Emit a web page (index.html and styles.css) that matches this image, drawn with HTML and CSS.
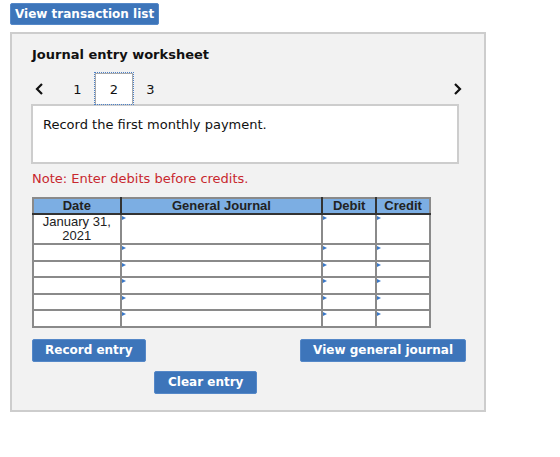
FILE: index.html
```html
<!DOCTYPE html>
<html lang="en">
<head>
  <meta charset="UTF-8">
  <title>Journal entry worksheet</title>
  <link rel="stylesheet" href="styles.css">
</head>
<body>
  <button class="btn btn-top">View transaction list</button>

  <div class="panel">
    <h2 class="panel-title">Journal entry worksheet</h2>

    <div class="steps">
      <span class="chev chev-prev">
        <svg width="9" height="12" viewBox="0 0 9 12"><polyline points="7,1 2,6 7,11" fill="none" stroke="#111" stroke-width="2.2"/></svg>
      </span>
      <span class="step">1</span>
      <span class="step active">2</span>
      <span class="step">3</span>
      <span class="spacer"></span>
      <span class="chev">
        <svg width="9" height="12" viewBox="0 0 9 12"><polyline points="2,1 7,6 2,11" fill="none" stroke="#111" stroke-width="2.2"/></svg>
      </span>
    </div>

    <div class="prompt">Record the first monthly payment.</div>

    <p class="note">Note: Enter debits before credits.</p>

    <table class="journal">
      <thead>
        <tr>
          <th class="c-date">Date</th>
          <th class="c-acct">General Journal</th>
          <th class="c-num">Debit</th>
          <th class="c-num">Credit</th>
        </tr>
      </thead>
      <tbody id="rows"></tbody>
    </table>

    <div class="actions">
      <button class="btn">Record entry</button>
      <button class="btn">View general journal</button>
    </div>
    <div class="actions-2">
      <button class="btn btn-clear">Clear entry</button>
    </div>
  </div>

  <script>
    const rows = ["January 31,<br>2021", "", "", "", "", ""];
    const body = document.getElementById('rows');
    rows.forEach((d, i) => {
      const tr = document.createElement('tr');
      if (i === 0) tr.className = 'first';
      tr.innerHTML = `<td class="c-date">${d}</td>` +
        `<td class="mark"></td><td class="mark"></td><td class="mark"></td>`;
      body.appendChild(tr);
    });
  </script>
</body>
</html>
```

FILE: styles.css
```css
body {
  margin: 0;
  padding: 3px 10px;
  font-family: "DejaVu Sans", Verdana, sans-serif;
  background: #fff;
}
.btn {
  display: inline-block;
  height: 23px;
  padding: 0 12px;
  background: #3d75ba;
  color: #fff;
  border: 1px solid #5588c8;
  border-radius: 2px;
  font-family: "DejaVu Sans", Verdana, sans-serif;
  font-size: 12px;
  font-weight: bold;
  cursor: pointer;
}
.btn-top {
  height: 22px;
  padding: 0 4px;
}
.btn-clear {
  padding: 0 13px;
}
.panel {
  box-sizing: border-box;
  width: 476px;
  height: 380px;
  margin-top: 7px;
  padding: 13px 25px 0 20px;
  background: #f2f2f2;
  border: 2px solid #cdcdcd;
}
.panel-title {
  margin: 0;
  font-size: 13px;
  font-weight: bold;
  color: #111;
  line-height: 16px;
}
.steps {
  display: flex;
  align-items: center;
  height: 31px;
  margin: 10px -6px 0 0;
}
.chev {
  display: flex;
  width: 9px;
  padding: 0 3px;
}
.chev-prev {
  margin-right: 13px;
}
.step {
  box-sizing: border-box;
  width: 35px;
  height: 31px;
  padding-top: 2px;
  line-height: 29px;
  text-align: center;
  font-size: 13px;
  color: #111;
}
.step.active {
  width: 38px;
  padding-top: 1px;
  background: #fff;
  border: 1px solid #aaa;
  border-bottom: none;
  outline: 1px dotted #4a80c8;
}
.spacer {
  flex: 1;
}
.prompt {
  box-sizing: border-box;
  height: 60px;
  margin-left: -1px;
  padding: 11px 10px;
  background: #fff;
  border: 2px solid #cdcdcd;
  font-size: 13px;
  color: #111;
}
.note {
  margin: 7px 0 11px;
  font-size: 13px;
  color: #c8282e;
}
.journal {
  border-collapse: collapse;
  width: 399px;
  font-family: "Liberation Sans", Arial, sans-serif;
  font-size: 13px;
  color: #222;
  border: 2px solid #8a8a8a;
}
.journal th {
  height: 14px;
  padding: 0;
  line-height: 14px;
  background: #7caee3;
  border: 2px solid #333;
  border-top-color: #8a8a8a;
  font-weight: bold;
}
.journal th:first-child { border-left-color: #8a8a8a; }
.journal th:last-child { border-right-color: #8a8a8a; }
.c-date { width: 86px; }
.c-acct { width: 201px; }
.c-num { width: 52px; }
.journal td {
  height: 14.6px;
  padding: 0;
  background: #fff;
  border: 2px solid #8a8a8a;
  text-align: center;
  vertical-align: top;
  line-height: 14px;
}
.journal tr.first td {
  height: 28px;
}
.journal td.mark {
  position: relative;
}
/* small blue marker in the corner of editable cells */
.journal td.mark::before {
  content: "";
  position: absolute;
  left: 0;
  top: 1px;
  border-left: 4px solid #3a78c8;
  border-top: 2.5px solid transparent;
  border-bottom: 2.5px solid transparent;
}
.actions {
  display: flex;
  justify-content: space-between;
  width: 434px;
  margin-top: 11px;
}
.actions-2 {
  margin: 9px 0 0 122px;
}
```
